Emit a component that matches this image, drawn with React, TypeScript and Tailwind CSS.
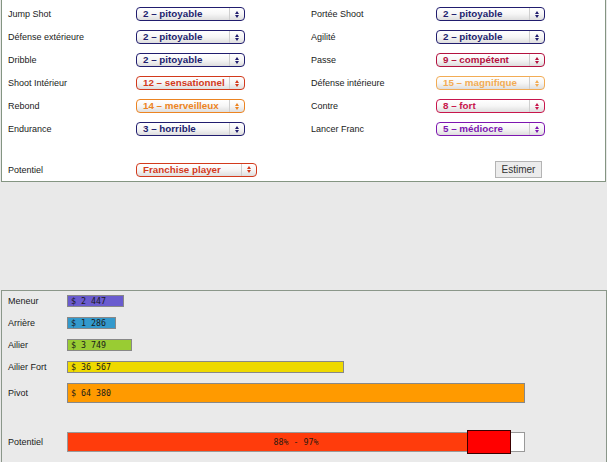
const SANS = "font-['Liberation_Sans',Arial,sans-serif]";
const MONO = "font-['DejaVu_Sans_Mono','Liberation_Mono',monospace]";

// border + text colour per rating level
const tones = {
  navy: "border-[#211d6e] text-[#211d6e]",
  red: "border-[#d23a1c] text-[#d23a1c]",
  orange: "border-[#ec8422] text-[#ec8422]",
  light: "border-[#f2ac55] text-[#f2ac55]",
  crimson: "border-[#b3123f] text-[#b3123f]",
  pink: "border-[#c8164c] text-[#c8164c]",
  purple: "border-[#7d16b0] text-[#7d16b0]",
};

type Row = { label: string; value: string; tone: string };

const leftRows: Row[] = [
  { label: "Jump Shot", value: "2 – pitoyable", tone: tones.navy },
  { label: "Défense extérieure", value: "2 – pitoyable", tone: tones.navy },
  { label: "Dribble", value: "2 – pitoyable", tone: tones.navy },
  { label: "Shoot Intérieur", value: "12 – sensationnel", tone: tones.red },
  { label: "Rebond", value: "14 – merveilleux", tone: tones.orange },
  { label: "Endurance", value: "3 – horrible", tone: tones.navy },
];

const rightRows: Row[] = [
  { label: "Portée Shoot", value: "2 – pitoyable", tone: tones.navy },
  { label: "Agilité", value: "2 – pitoyable", tone: tones.navy },
  { label: "Passe", value: "9 – compétent", tone: tones.crimson },
  { label: "Défense intérieure", value: "15 – magnifique", tone: tones.light },
  { label: "Contre", value: "8 – fort", tone: tones.pink },
  { label: "Lancer Franc", value: "5 – médiocre", tone: tones.purple },
];

const salaries = [
  { label: "Meneur", value: "$ 2 447", row: "h-[12px]", bar: "w-[57px] bg-[#6a5ccf]" },
  { label: "Arrière", value: "$ 1 286", row: "h-[12px]", bar: "w-[49px] bg-[#3399cc]" },
  { label: "Ailier", value: "$ 3 749", row: "h-[12px]", bar: "w-[65px] bg-[#99cc33]" },
  { label: "Ailier Fort", value: "$ 36 567", row: "h-[12px]", bar: "w-[277px] bg-[#eed900]" },
  { label: "Pivot", value: "$ 64 380", row: "h-[20px]", bar: "w-[458px] bg-[#ff9a00]" },
];

function Select({ value, tone, wide }: { value: string; tone: string; wide?: boolean }) {
  return (
    <div
      className={`flex h-[14px] items-stretch overflow-hidden rounded-[4px] border bg-linear-to-b from-white via-[#f6f6f6] to-[#dedede] ${
        wide ? "w-[121px]" : "w-[109px]"
      } ${tone}`}
    >
      <span className="flex-1 overflow-hidden pl-[6px] text-[9.8px] font-bold leading-[12px] whitespace-nowrap">
        {value}
      </span>
      <span className="flex w-[15px] flex-none items-center justify-center border-l border-[#cfcfcf]">
        <svg width="4" height="7" viewBox="0 0 4 7" fill="currentColor">
          <polygon points="2,0 4,3 0,3" />
          <polygon points="0,4 4,4 2,7" />
        </svg>
      </span>
    </div>
  );
}

function Column({ rows, labelWidth }: { rows: Row[]; labelWidth: string }) {
  return (
    <div className="flex flex-col gap-[9px]">
      {rows.map((r) => (
        <div key={r.label} className="flex h-[14px] items-center">
          <span className={`${labelWidth} pt-px text-[9px] leading-none text-[#1a1a1a]`}>{r.label}</span>
          <Select value={r.value} tone={r.tone} />
        </div>
      ))}
    </div>
  );
}

export default function App() {
  return (
    <div className={`min-h-screen w-[607px] bg-[#e9e9e9] ${SANS}`}>
      {/* Ratings form */}
      <div className="mr-px ml-px border-x border-b border-[#849582] bg-white pt-[7px] pb-[3px] pl-[6px]">
        <div className="flex">
          <div className="w-[303px]">
            <Column rows={leftRows} labelWidth="w-[128px]" />
          </div>
          <Column rows={rightRows} labelWidth="w-[125px]" />
        </div>
        <div className="mt-[25px] flex h-[17px] items-center">
          <span className="w-[128px] pt-px text-[9px] leading-none text-[#1a1a1a]">Potentiel</span>
          <Select value="Franchise player" tone={tones.red} wide />
          <button className="ml-[238px] h-[17px] w-[47px] border border-[#b4b4b4] bg-[#ececec] text-[10px] leading-none text-[#333]">
            Estimer
          </button>
        </div>
      </div>

      {/* Salary estimate */}
      <div className="mt-[108px] ml-px min-h-[172px] border-x border-t border-[#8b978a] bg-[#eaeaea] pt-[4px] pl-[6px]">
        <div className="flex flex-col gap-[10px]">
          {salaries.map((s) => (
            <div key={s.label} className={`flex items-center ${s.row}`}>
              <span className="w-[59px] text-[9px] leading-none text-[#1a1a1a]">{s.label}</span>
              <div className={`flex h-full items-center border border-[#888] pl-[3px] ${s.bar}`}>
                <span className={`${MONO} text-[8.3px] leading-none whitespace-pre text-[#1a1a1a]`}>{s.value}</span>
              </div>
            </div>
          ))}
        </div>
        <div className="mt-[27px] flex h-[24px] items-center">
          <span className="w-[59px] text-[9px] leading-none text-[#1a1a1a]">Potentiel</span>
          <div className="relative h-[20px] w-[458px] border border-[#999] bg-white">
            <div className="h-full w-[399px] bg-[#ff3c0c]" />
            <div className="absolute top-[-3px] left-[399px] h-[24px] w-[44px] border border-[#3a0000] bg-[#ff0000]" />
            <span
              className={`absolute inset-0 flex items-center justify-center ${MONO} text-[8.3px] leading-none whitespace-pre text-[#2a1a10]`}
            >
              88% - 97%
            </span>
          </div>
        </div>
      </div>
    </div>
  );
}
